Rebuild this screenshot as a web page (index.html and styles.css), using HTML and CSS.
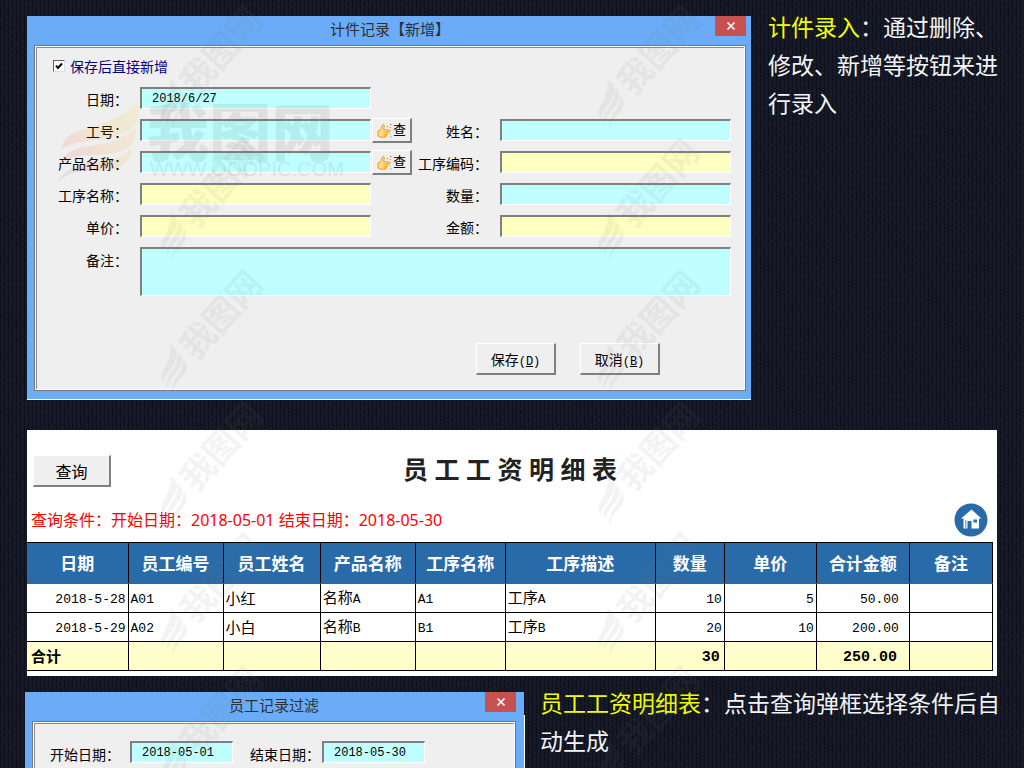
FILE: index.html
```html
<!DOCTYPE html>
<html lang="zh-CN">
<head>
<meta charset="utf-8">
<title>计件工资系统</title>
<meta name="viewport" content="width=device-width, initial-scale=1">
<link rel="stylesheet" href="styles.css">
</head>
<body>
<svg class="defs" aria-hidden="true">
  <symbol id="hand" viewBox="0 0 16 16">
    <path d="M1 8 L3.500 7 L5.500 2 C6.500 1 7.500 2 7.300 3 L6.500 6.500 L12.500 7 C13.500 7 13.500 8.600 12.500 8.700 L9.500 9 C11 9.500 11 11 9.800 11.200 L9.800 12.500 L9 14 L4 14.300 L1 13 Z" fill="#ffdf85" stroke="#f09a1c" stroke-width="1"/>
    <path d="M6.500 9 H9.500 M6.500 11.200 H10 M6.500 12.800 H9.500" stroke="#ef8a12" stroke-width=".7"/>
    <path d="M10 4 L11 3 M12.500 5 L13.500 4 M13 1.500 H14.500 M12.500 11 H13.500 M13.500 14 H14.500" stroke="#d4691e" stroke-width="1"/>
  </symbol>
  <symbol id="cross" viewBox="0 0 10 10">
    <path d="M1.500 1.500 L8.500 8.500 M8.500 1.500 L1.500 8.500" stroke="#fff" stroke-width="1.700"/>
  </symbol>
  <symbol id="wing" viewBox="0 0 80 80">
    <path d="M4 48 C8 26 28 30 46 22 C60 16 72 10 78 0 C82 18 76 28 58 34 C38 40 14 38 4 48 Z M2 62 C10 42 34 46 52 40 C64 36 72 30 76 26 C78 42 68 50 50 52 C30 54 14 52 2 62 Z M0 80 C12 58 34 62 50 58 C60 56 68 50 72 46 C70 62 60 68 42 68 C24 68 12 68 0 80 Z"/>
  </symbol>
  <symbol id="stamp" viewBox="0 0 150 44" overflow="visible">
    <use href="#wing" x="0" y="2" width="36" height="36"/>
    <text class="stamp-text" x="40" y="33">我图网</text>
  </symbol>
</svg>

<main class="page">
  <section class="row entry-row">
    <div class="dialog">
      <header class="titlebar">
        <h2 class="dialog-title">计件记录【新增】</h2>
        <button class="close" type="button" aria-label="关闭"><svg class="cross"><use href="#cross"/></svg></button>
      </header>
      <form class="dialog-body">
        <label class="keep"><input class="tick" type="checkbox" checked>保存后直接新增</label>
        <div class="fields">
          <label class="label c1" for="date">日期：</label>
          <input class="field c2" id="date" type="text" value="2018/6/27">

          <label class="label c1" for="empno">工号：</label>
          <input class="field c2" id="empno" type="text">
          <button class="lookup" type="button"><svg class="hand"><use href="#hand"/></svg>查</button>
          <label class="label c4" for="name">姓名：</label>
          <input class="field c5" id="name" type="text">

          <label class="label c1" for="product">产品名称：</label>
          <input class="field c2" id="product" type="text">
          <button class="lookup" type="button"><svg class="hand"><use href="#hand"/></svg>查</button>
          <label class="label c4" for="code">工序编码：</label>
          <input class="field c5 auto" id="code" type="text">

          <label class="label c1" for="process">工序名称：</label>
          <input class="field c2 auto" id="process" type="text">
          <label class="label c4" for="qty">数量：</label>
          <input class="field c5" id="qty" type="text">

          <label class="label c1" for="price">单价：</label>
          <input class="field c2 auto" id="price" type="text">
          <label class="label c4" for="amount">金额：</label>
          <input class="field c5 auto" id="amount" type="text">

          <label class="label c1" for="remark">备注：</label>
          <textarea class="field memo" id="remark"></textarea>
        </div>
        <div class="actions">
          <button class="btn" type="button">保存<span class="key">(<u>D</u>)</span></button>
          <button class="btn" type="button">取消<span class="key">(<u>B</u>)</span></button>
        </div>
      </form>
    </div>
    <p class="note entry-note"><span class="hl">计件录入</span>：通过删除、修改、新增等按钮来进行录入</p>
  </section>

  <section class="report">
    <header class="report-head">
      <button class="btn query" type="button">查询</button>
      <h1 class="report-title">员 工 工 资 明 细 表</h1>
    </header>
    <div class="report-bar">
      <p class="condition">查询条件：开始日期：2018-05-01 结束日期：2018-05-30</p>
      <a class="home" href="#" aria-label="首页">
        <svg class="home-icon" viewBox="0 0 34 34">
          <circle cx="17" cy="17" r="16.500" fill="#296ba9"/>
          <path d="M17.500 6.500 L27.500 15.500 H25 V25.500 H17.500 V18 H13.500 V25.500 H9.500 V15.500 H7 Z" fill="#fff"/>
          <path d="M11.800 17 V25.500" stroke="#296ba9" stroke-width=".8"/>
          <rect x="19.500" y="16.500" width="3.500" height="3" fill="#296ba9"/>
        </svg>
      </a>
    </div>
    <table class="sheet">
      <colgroup>
        <col class="w-date"><col class="w-id"><col class="w-name"><col class="w-id"><col class="w-proc">
        <col class="w-desc"><col class="w-qty"><col class="w-price"><col class="w-sum"><col class="w-note">
      </colgroup>
      <thead>
        <tr><th>日期</th><th>员工编号</th><th>员工姓名</th><th>产品名称</th><th>工序名称</th><th>工序描述</th><th>数量</th><th>单价</th><th>合计金额</th><th>备注</th></tr>
      </thead>
      <tbody>
        <tr><td class="num">2018-5-28</td><td class="code">A01</td><td>小红</td><td>名称<span class="code">A</span></td><td class="code">A1</td><td>工序<span class="code">A</span></td><td class="num">10</td><td class="num">5</td><td class="num money">50.00</td><td></td></tr>
        <tr><td class="num">2018-5-29</td><td class="code">A02</td><td>小白</td><td>名称<span class="code">B</span></td><td class="code">B1</td><td>工序<span class="code">B</span></td><td class="num">20</td><td class="num">10</td><td class="num money">200.00</td><td></td></tr>
      </tbody>
      <tfoot>
        <tr><td class="total">合计</td><td></td><td></td><td></td><td></td><td></td><td class="num">30</td><td></td><td class="num money">250.00</td><td></td></tr>
      </tfoot>
    </table>
  </section>

  <section class="row filter-row">
    <div class="dialog filter">
      <header class="titlebar">
        <h2 class="dialog-title">员工记录过滤</h2>
        <button class="close" type="button" aria-label="关闭"><svg class="cross"><use href="#cross"/></svg></button>
      </header>
      <form class="dialog-body range">
        <label class="label from-label" for="from">开始日期：</label>
        <input class="field" id="from" type="text" value="2018-05-01">
        <label class="label" for="to">结束日期：</label>
        <input class="field" id="to" type="text" value="2018-05-30">
      </form>
    </div>
    <p class="note filter-note"><span class="hl">员工工资明细表</span>：点击查询弹框选择条件后自动生成</p>
  </section>
</main>

<svg class="watermark" viewBox="0 0 1024 768" preserveAspectRatio="xMinYMin slice" aria-hidden="true">
  <defs>
    <linearGradient id="flame" x1="1" y1="0" x2="0" y2="1">
      <stop offset="0" stop-color="#f5d800"/><stop offset=".45" stop-color="#f0a000"/><stop offset=".7" stop-color="#f04030"/><stop offset="1" stop-color="#30b060"/>
    </linearGradient>
  </defs>
  <g class="stamps">
    <use href="#stamp" width="150" height="44" transform="translate(144 104) rotate(-48)"/>
    <use href="#stamp" width="150" height="44" transform="translate(579 104) rotate(-48)"/>
    <use href="#stamp" width="150" height="44" transform="translate(144 236) rotate(-48)"/>
    <use href="#stamp" width="150" height="44" transform="translate(579 236) rotate(-48)"/>
    <use href="#stamp" width="150" height="44" transform="translate(144 367) rotate(-48)"/>
    <use href="#stamp" width="150" height="44" transform="translate(579 367) rotate(-48)"/>
    <use href="#stamp" width="150" height="44" transform="translate(144 498) rotate(-48)"/>
    <use href="#stamp" width="150" height="44" transform="translate(579 498) rotate(-48)"/>
    <use href="#stamp" width="150" height="44" transform="translate(144 629) rotate(-48)"/>
    <use href="#stamp" width="150" height="44" transform="translate(579 629) rotate(-48)"/>
    <use href="#stamp" width="150" height="44" transform="translate(144 761) rotate(-48)"/>
    <use href="#stamp" width="150" height="44" transform="translate(579 761) rotate(-48)"/>
  </g>
  <g class="brand">
    <use href="#wing" x="57" y="100" width="82" height="82" fill="url(#flame)"/>
    <text class="brand-name" x="146" y="155">我图网</text>
    <text class="brand-url" x="149" y="175">WWW.OOOPIC.COM</text>
  </g>
</svg>
</body>
</html>
```
FILE: styles.css
```css
* { box-sizing: border-box; }

body {
  margin: 0;
  position: relative;
  color: #000;
  font-family: "Noto Sans", "Noto Sans CJK SC", sans-serif;
  font-size: 14px;
  background-color: #131623;
  background-image:
    repeating-linear-gradient(90deg, rgba(0, 0, 8, .35) 0 1px, transparent 1px 4px),
    repeating-linear-gradient(25deg, rgba(80, 90, 120, .12) 0 1px, transparent 1px 3px);
  min-height: 100vh;
  overflow-x: hidden;
}

h1, h2, p { margin: 0; }
button, input, textarea { font-family: inherit; color: inherit; margin: 0; }

.defs { position: absolute; width: 0; height: 0; }

.page { padding-top: 16px; }
.row { display: flex; align-items: flex-start; }
.entry-row { padding: 0 24px 0 27px; gap: 17px; }
.filter-row { padding: 0 24px 0 25px; gap: 16px; }

/* dialogs */
.dialog {
  flex: 1;
  min-width: 0;
  padding: 0 5px 8px 7px;
  background: #6aacf7;
  border-bottom: 1px solid #fff;
}
.filter { padding: 0 8px 0 7px; border-bottom: 0; box-shadow: 1px 23px 0 #fff; }
.titlebar { display: grid; grid-template-columns: 31px 1fr 31px; height: 29px; }
.dialog-title {
  grid-column: 2;
  text-align: center;
  font-size: 15px;
  font-weight: 400;
  line-height: 27px;
  color: #2b3036;
}
.close {
  height: 20px;
  padding: 0;
  border: 0;
  background: #c75050;
  display: grid;
  place-items: center;
}
.cross { width: 10px; height: 10px; }
.dialog-body {
  display: block;
  background: #efefef;
  border: 1px solid #75797f;
  box-shadow: inset 1px 1px #fff, inset -1px -1px #fff, inset 2px 2px #8a8a8a;
  padding: 12px 14px 15px 0;
}

.keep {
  display: flex;
  align-items: center;
  gap: 5px;
  height: 16px;
  margin-left: 18px;
  color: #000080;
}
.tick {
  appearance: none;
  width: 12px;
  height: 12px;
  background: #fff;
  border: 1px solid;
  border-color: #606060 #e0e0e0 #e0e0e0 #606060;
}
.tick:checked {
  background: #fff url("data:image/svg+xml,%3Csvg xmlns='http://www.w3.org/2000/svg' viewBox='0 0 10 10'%3E%3Cpath d='M2 4.500 L4 7 L8 2.500' fill='none' stroke='black' stroke-width='2'/%3E%3C/svg%3E");
}

.fields {
  display: grid;
  grid-template-columns: 105px 1fr 41px 88px 1fr;
  grid-template-rows: repeat(5, 22px) 49px;
  row-gap: 10px;
  align-items: center;
  margin-top: 13px;
}
.label { padding: 4px 12px 0 0; line-height: 20px; text-align: right; white-space: nowrap; }
.c1 { grid-column: 1; }
.c2 { grid-column: 2; }
.c4 { grid-column: 4; }
.c5 { grid-column: 5; }
.field {
  width: 100%;
  min-width: 0;
  height: 22px;
  padding: 0 10px;
  border: solid;
  border-width: 2px 1px 1px 2px;
  border-color: #808080 #fff #fff #808080;
  border-radius: 0;
  background: #bfffff;
  font-family: "Liberation Mono", monospace;
  font-size: 12px;
  outline: 0;
}
.auto { background: #ffffbf; }
.memo { grid-column: 2 / 6; height: 49px; resize: none; display: block; }
.fields .label:last-of-type { align-self: start; }

.btn, .lookup {
  background: #efefef;
  border: solid;
  border-width: 1px 2px 2px 1px;
  border-color: #fff #808080 #808080 #fff;
  padding: 0;
}
.lookup {
  grid-column: 3;
  height: 25px;
  display: flex;
  align-items: flex-start;
  justify-content: center;
  font-size: 13px;
  line-height: 20px;
  margin-left: 1px;
}
.hand { width: 16px; height: 16px; margin-top: 4px; }

.actions { display: flex; justify-content: flex-end; gap: 24px; margin: 47px 71px 0 0; }
.btn { width: 80px; height: 32px; font-size: 14px; }
.key { font-family: "Liberation Mono", monospace; font-size: 12px; }

/* captions */
.note { color: #f2f4f6; font-size: 23px; line-height: 38px; flex: none; margin-top: -8px; }
.entry-note { width: 232px; }
.filter-note { width: 460px; }
.hl { color: #f0ff00; }

/* report */
.report { background: #fff; margin: 30px 27px 16px; padding: 20px 4px 5px 0; }
.report-head { display: grid; grid-template-columns: 78px 1fr 78px; align-items: center; padding: 0 6px; }
.query { width: 78px; font-size: 16px; margin-top: 4px; }
.report-title { text-align: center; font-size: 25px; line-height: 38px; color: #222; }
.report-bar { display: flex; justify-content: space-between; align-items: center; padding: 0 5px 0 4px; margin: 15px 0 5px; }
.condition { color: #f00; font-size: 16px; line-height: 24px; }
.home { display: block; width: 34px; height: 34px; }
.home-icon { display: block; width: 34px; height: 34px; }

.sheet { width: 100%; table-layout: fixed; border-collapse: collapse; }
.w-date { width: 101px; }
.w-id { width: 95px; }
.w-name { width: 97px; }
.w-proc { width: 90px; }
.w-desc { width: 150px; }
.w-qty { width: 69px; }
.w-price { width: 92px; }
.w-sum { width: 93px; }
.w-note { width: 83px; }
.sheet th, .sheet td { border: 1px solid #000; padding: 0 2px; }
.sheet tr > :first-child { border-left: 0; }
.sheet th { height: 41px; padding-top: 2px; background: #296ba9; color: #fff; font-size: 17px; line-height: 24px; border-bottom-color: #5b5b5b; white-space: nowrap; }
.sheet td { height: 29px; font-size: 15px; line-height: 24px; }
.sheet .code, .sheet .num { font-family: "Liberation Mono", monospace; font-size: 13px; }
.sheet td.code, .sheet td.num { padding-top: 4px; }
.sheet .num { text-align: right; }
.sheet .money { padding-right: 10px; }
.sheet tfoot td { background: #ffc; font-weight: 700; }
.sheet tfoot .num { font-size: 15px; padding-right: 4px; }
.sheet tfoot .money { padding-right: 12px; }
.sheet .total { padding-left: 4px; }

/* filter dialog */
.range { display: grid; grid-template-columns: 97px 103px 89px 103px; align-items: center; padding: 17px 0 6px; }
.range .label { padding: 6px 2px 0 0; }
.range .from-label { padding-right: 10px; }

/* overlay marks */
.watermark { position: absolute; inset: 0; width: 100%; height: 100%; pointer-events: none; }
.stamps { fill: #777; opacity: .09; }
.stamp-text { font-family: "Noto Sans CJK SC", sans-serif; font-size: 34px; font-weight: 700; }
.brand { opacity: .12; fill: #4f7f6a; }
.brand-name { font-family: "Noto Sans CJK SC", sans-serif; font-size: 62px; font-weight: 900; }
.brand-url { font-family: "Liberation Sans", sans-serif; font-size: 20px; }
```
